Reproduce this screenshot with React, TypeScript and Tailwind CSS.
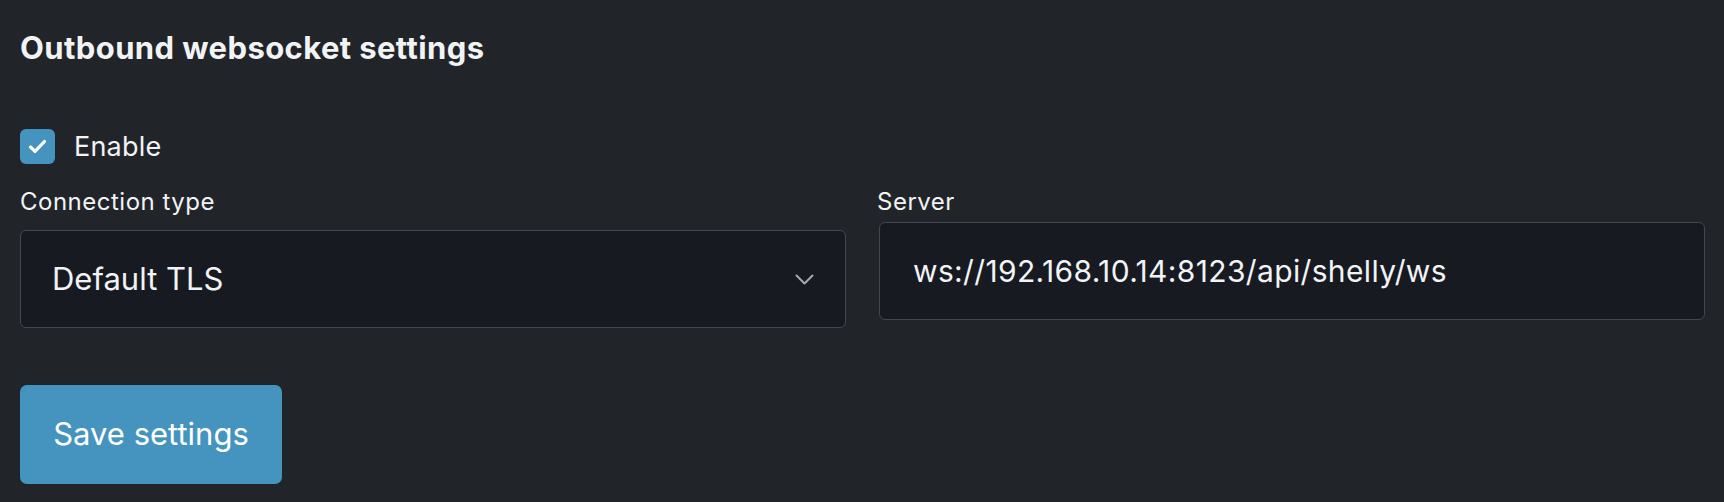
export default function App() {
  return (
    <div
      className="min-h-[502px] w-full bg-[#212529] pl-[20px] pr-[19px] pt-[30px] text-[#f1f3f5]"
      style={{ fontFamily: "Inter, 'Noto Sans', sans-serif" }}
    >
      <h2 className="text-[31px] font-bold leading-[36px] tracking-[0.4px]">
        Outbound websocket settings
      </h2>

      <label className="mt-[63px] flex items-center gap-[19px]">
        <span className="flex h-[35px] w-[35px] items-center justify-center rounded-[6px] bg-[#4494bf]">
          <svg width="19" height="15" viewBox="0 0 19 15" fill="none">
            <path
              d="M2.5 8l4.5 4.3L16.5 2.5"
              stroke="white"
              strokeWidth="3.2"
              strokeLinecap="round"
              strokeLinejoin="round"
            />
          </svg>
        </span>
        <span className="text-[27px] leading-[35px] tracking-[0.2px]">Enable</span>
      </label>

      <div className="mt-[22px] grid grid-cols-2 gap-[33px]">
        <div>
          <div className="text-[24px] leading-[32px] tracking-[0.5px]">Connection type</div>
          <div className="mt-[12px] flex h-[98px] items-center justify-between rounded-[6px] border border-[#3f4955] bg-[#171b21] pl-[31px] pr-[31px]">
            <span className="text-[31px]">Default TLS</span>
            <svg width="19" height="11" viewBox="0 0 19 11" fill="none">
              <path
                d="M1.5 1.5l8 8 8-8"
                stroke="#a3abb4"
                strokeWidth="2"
                strokeLinecap="round"
                strokeLinejoin="round"
              />
            </svg>
          </div>
        </div>
        <div>
          <div className="-ml-[2px] text-[24px] leading-[32px] tracking-[0.5px]">Server</div>
          <div className="mt-[4px] flex h-[98px] items-center rounded-[6px] border border-[#3f4955] bg-[#171b21] pl-[33px]">
            <span className="text-[30px] tracking-[0.35px]">ws://192.168.10.14:8123/api/shelly/ws</span>
          </div>
        </div>
      </div>

      <button className="mt-[57px] flex h-[99px] w-[262px] items-center justify-center rounded-[7px] bg-[#4494bf] text-[31px] text-white">
        Save settings
      </button>
    </div>
  );
}
